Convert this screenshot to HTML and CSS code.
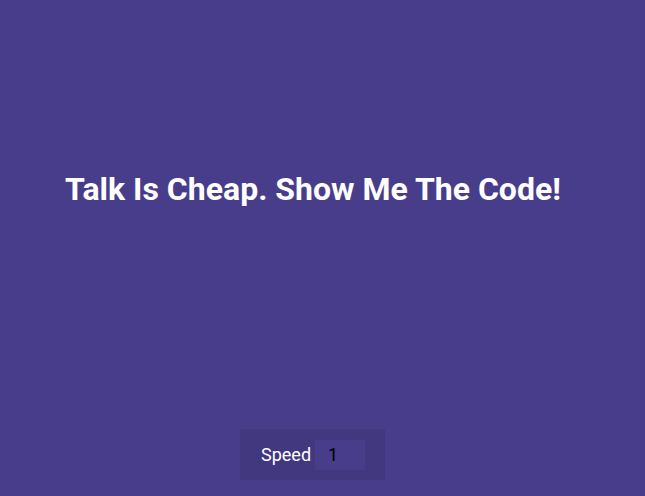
FILE: index.html
```html
<!DOCTYPE html>
<html>
<head>
<meta charset="utf-8">
<link rel="stylesheet" href="styles.css">
</head>
<body>
<main class="page">
  <section class="stage">
    <h1 class="title">Talk Is Cheap. Show Me The Code!</h1>
  </section>
  <footer class="controls">
    <label class="speed">Speed <input class="speed-input" type="text" value="1"></label>
  </footer>
</main>
</body>
</html>
```
FILE: styles.css
```css
html, body {
  margin: 0;
  padding: 0;
  height: 100%;
  background: #483d8b;
  font-family: Roboto, "Liberation Sans", sans-serif;
}
.page {
  height: 496px;
  display: flex;
  flex-direction: column;
}
.stage {
  height: 429px;
  padding-left: 65px;
  box-sizing: border-box;
  padding-top: 170px;
}
.title {
  margin: 0;
  color: #fff;
  font-size: 32px;
  font-weight: 700;
  line-height: 38px;
}
.controls {
  align-self: flex-start;
  margin-left: 240px;
  width: 145px;
  height: 51px;
  box-sizing: border-box;
  background: rgba(0, 0, 0, 0.08);
  display: flex;
  align-items: center;
  padding-left: 21px;
}
.speed {
  color: #fff;
  font-size: 18px;
  display: flex;
  align-items: center;
  gap: 4px;
}
.speed-input {
  width: 50px;
  height: 30px;
  box-sizing: border-box;
  border: none;
  outline: none;
  background: #483d8b;
  color: #000;
  font-family: Roboto, "Liberation Sans", sans-serif;
  font-size: 18px;
  padding: 0 0 0 13px;
}
```
